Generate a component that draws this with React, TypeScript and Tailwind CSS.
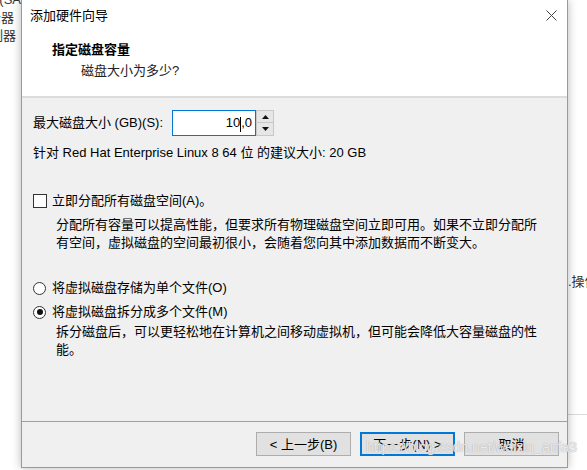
import React from "react";

const font = "font-['Liberation_Sans','Noto_Sans_CJK_SC',sans-serif]";

const Radio = ({ checked }: { checked?: boolean }) => (
    <span className="flex items-center justify-center w-[13px] h-[13px] rounded-full border border-[#333] bg-white">
        {checked && <span className="w-[6px] h-[6px] rounded-full bg-[#111]" />}
    </span>
);

const Button = ({ label, primary }: { label: string; primary?: boolean }) => (
    <button
        className={`w-[95px] h-[24px] bg-[#e1e1e1] text-[13px] leading-none text-black ${
            primary ? "border-2 border-[#0078d7]" : "border border-[#adadad]"
        }`}
    >
        {label}
    </button>
);

const App = () => {
    return (
        <div className={`flex w-[587px] h-[470px] bg-white overflow-hidden text-black ${font}`}>
            {/* window behind, left side */}
            <div className="flex flex-col items-end w-[21px] shrink-0 overflow-hidden text-[13px] leading-[18px] text-[#333] -mt-[9px]">
                <span className="whitespace-nowrap">(SA</span>
                <span className="whitespace-nowrap pr-[7px]">示器</span>
                <span className="whitespace-nowrap pr-[5px]">制器</span>
            </div>

            {/* dialog */}
            <div className="relative flex flex-col w-[547px] h-[468px] shrink-0 border-x border-b border-[#9a9a9a] bg-[#f0f0f0] shadow-[0_0_9px_rgba(0,0,0,0.28)]">
                <div className="flex items-center justify-between h-[31px] bg-white pl-[8px] pr-[10px]">
                    <span className="text-[13px] leading-none">添加硬件向导</span>
                    <svg width="11" height="11" viewBox="0 0 11 11" className="mb-[1px]">
                        <path d="M0.5 0.5 L10.5 10.5 M10.5 0.5 L0.5 10.5" stroke="#444" strokeWidth="1" />
                    </svg>
                </div>
                <div className="flex flex-col h-[67px] bg-white border-b-2 border-[#dcdcdc]">
                    <span className="pl-[30px] pt-[10px] text-[13px] leading-[18px] font-bold">指定磁盘容量</span>
                    <span className="pl-[59px] pt-[3px] text-[13px] leading-[18px] text-[#222]">磁盘大小为多少?</span>
                </div>

                <div className="flex flex-col h-[324px] px-[11px] pt-[12px] text-[13px] leading-[18px] border-b border-[#a0a0a0]">
                    <div className="flex items-center h-[26px]">
                        <span className="w-[139px]">最大磁盘大小 (GB)(S):</span>
                        <div className="flex items-center justify-end w-[84px] h-[26px] border border-[#0078d7] bg-white pr-[3px]">
                            <span>10</span>
                            <span className="w-px h-[15px] bg-black mt-[2px]" />
                            <span>,0</span>
                        </div>
                        <div className="flex flex-col w-[18px] h-[26px] border border-[#c8c8c8] bg-[#e6e6e6]">
                            <span className="flex items-center justify-center h-1/2 border-b border-[#c8c8c8]">
                                <svg width="7" height="4" viewBox="0 0 7 4">
                                    <path d="M0 4 L3.5 0 L7 4 Z" fill="#111" />
                                </svg>
                            </span>
                            <span className="flex items-center justify-center h-1/2">
                                <svg width="7" height="4" viewBox="0 0 7 4">
                                    <path d="M0 0 L3.5 4 L7 0 Z" fill="#111" />
                                </svg>
                            </span>
                        </div>
                    </div>

                    <p className="mt-[8px]">针对 Red Hat Enterprise Linux 8 64 位 的建议大小: 20 GB</p>

                    <div className="flex items-center gap-[5px] mt-[30px]">
                        <span className="w-[14px] h-[14px] border border-[#333] bg-white" />
                        <span>立即分配所有磁盘空间(A)。</span>
                    </div>
                    <p className="mt-[6px] pl-[23px] pr-[8px]">
                        分配所有容量可以提高性能，但要求所有物理磁盘空间立即可用。如果不立即分配所有空间，虚拟磁盘的空间最初很小，会随着您向其中添加数据而不断变大。
                    </p>

                    <div className="flex items-center gap-[6px] mt-[27px]">
                        <Radio />
                        <span>将虚拟磁盘存储为单个文件(O)</span>
                    </div>
                    <div className="flex items-center gap-[6px] mt-[6px]">
                        <Radio checked />
                        <span>将虚拟磁盘拆分成多个文件(M)</span>
                    </div>
                    <p className="mt-[2px] pl-[23px] pr-[8px]">
                        拆分磁盘后，可以更轻松地在计算机之间移动虚拟机，但可能会降低大容量磁盘的性能。
                    </p>
                </div>

                <div className="flex justify-end gap-[9px] pt-[10px] pr-[8px]">
                    <Button label="< 上一步(B)" />
                    <Button label="下一步(N) >" primary />
                    <Button label="取消" />
                </div>

                <span className="absolute left-[344px] top-[440px] text-[14px] leading-none text-white/80 whitespace-nowrap [text-shadow:0_0_1px_#888]">
                    https://blog.csdn.net/weixin_anfa3
                </span>
            </div>

            {/* window behind, right side */}
            <div className="flex flex-col flex-1 overflow-hidden text-[13px] leading-[18px] text-[#333]">
                <span className="mt-[273px] whitespace-nowrap">.操作</span>
                <div className="mt-[123px] h-px bg-[#dadada]" />
            </div>
        </div>
    );
};

export default App;
